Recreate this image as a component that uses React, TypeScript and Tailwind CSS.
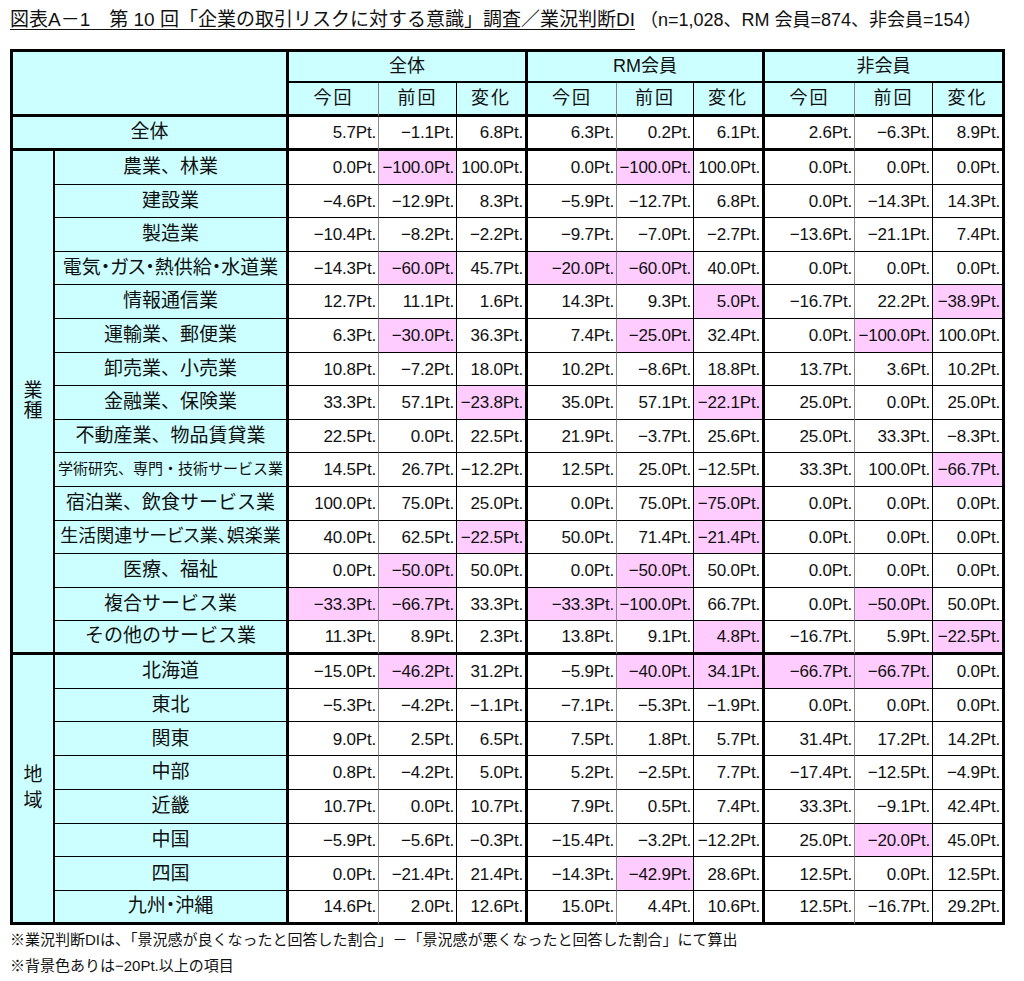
import React from "react";

type Row = { label: string; v: string[]; p: number[]; cls?: string };

const industry: Row[] = [
  { label: "農業、林業", v: ["0.0", "−100.0", "100.0", "0.0", "−100.0", "100.0", "0.0", "0.0", "0.0"], p: [1, 4] },
  { label: "建設業", v: ["−4.6", "−12.9", "8.3", "−5.9", "−12.7", "6.8", "0.0", "−14.3", "14.3"], p: [] },
  { label: "製造業", v: ["−10.4", "−8.2", "−2.2", "−9.7", "−7.0", "−2.7", "−13.6", "−21.1", "7.4"], p: [] },
  { label: "電気・ガス・熱供給・水道業", v: ["−14.3", "−60.0", "45.7", "−20.0", "−60.0", "40.0", "0.0", "0.0", "0.0"], p: [1, 3, 4], cls: "text-[19px] [font-feature-settings:'palt']" },
  { label: "情報通信業", v: ["12.7", "11.1", "1.6", "14.3", "9.3", "5.0", "−16.7", "22.2", "−38.9"], p: [5, 8] },
  { label: "運輸業、郵便業", v: ["6.3", "−30.0", "36.3", "7.4", "−25.0", "32.4", "0.0", "−100.0", "100.0"], p: [1, 4, 7] },
  { label: "卸売業、小売業", v: ["10.8", "−7.2", "18.0", "10.2", "−8.6", "18.8", "13.7", "3.6", "10.2"], p: [] },
  { label: "金融業、保険業", v: ["33.3", "57.1", "−23.8", "35.0", "57.1", "−22.1", "25.0", "0.0", "25.0"], p: [2, 5] },
  { label: "不動産業、物品賃貸業", v: ["22.5", "0.0", "22.5", "21.9", "−3.7", "25.6", "25.0", "33.3", "−8.3"], p: [] },
  { label: "学術研究、専門・技術サービス業", v: ["14.5", "26.7", "−12.2", "12.5", "25.0", "−12.5", "33.3", "100.0", "−66.7"], p: [8], cls: "text-[15px]" },
  { label: "宿泊業、飲食サービス業", v: ["100.0", "75.0", "25.0", "0.0", "75.0", "−75.0", "0.0", "0.0", "0.0"], p: [5] },
  { label: "生活関連サービス業、娯楽業", v: ["40.0", "62.5", "−22.5", "50.0", "71.4", "−21.4", "0.0", "0.0", "0.0"], p: [2, 5], cls: "text-[18px] [font-feature-settings:'palt']" },
  { label: "医療、福祉", v: ["0.0", "−50.0", "50.0", "0.0", "−50.0", "50.0", "0.0", "0.0", "0.0"], p: [1, 4] },
  { label: "複合サービス業", v: ["−33.3", "−66.7", "33.3", "−33.3", "−100.0", "66.7", "0.0", "−50.0", "50.0"], p: [0, 1, 3, 4, 7] },
  { label: "その他のサービス業", v: ["11.3", "8.9", "2.3", "13.8", "9.1", "4.8", "−16.7", "5.9", "−22.5"], p: [5, 8] },
];

const region: Row[] = [
  { label: "北海道", v: ["−15.0", "−46.2", "31.2", "−5.9", "−40.0", "34.1", "−66.7", "−66.7", "0.0"], p: [1, 4, 5, 6, 7] },
  { label: "東北", v: ["−5.3", "−4.2", "−1.1", "−7.1", "−5.3", "−1.9", "0.0", "0.0", "0.0"], p: [] },
  { label: "関東", v: ["9.0", "2.5", "6.5", "7.5", "1.8", "5.7", "31.4", "17.2", "14.2"], p: [] },
  { label: "中部", v: ["0.8", "−4.2", "5.0", "5.2", "−2.5", "7.7", "−17.4", "−12.5", "−4.9"], p: [] },
  { label: "近畿", v: ["10.7", "0.0", "10.7", "7.9", "0.5", "7.4", "33.3", "−9.1", "42.4"], p: [] },
  { label: "中国", v: ["−5.9", "−5.6", "−0.3", "−15.4", "−3.2", "−12.2", "25.0", "−20.0", "45.0"], p: [7] },
  { label: "四国", v: ["0.0", "−21.4", "21.4", "−14.3", "−42.9", "28.6", "12.5", "0.0", "12.5"], p: [4] },
  { label: "九州・沖縄", v: ["14.6", "2.0", "12.6", "15.0", "4.4", "10.6", "12.5", "−16.7", "29.2"], p: [], cls: "text-[19px] [font-feature-settings:'palt']" },
];

const total = ["5.7", "−1.1", "6.8", "6.3", "0.2", "6.1", "2.6", "−6.3", "8.9"];

function rightBorder(j: number) {
  if (j % 3 === 0) return "border-r border-r-[#8c8c8c]";
  if (j % 3 === 1) return "border-r border-r-black";
  return "border-r-[3px] border-r-black";
}

function ValueCell({ j, text, pink, last }: { j: number; text: string; pink: boolean; last: boolean }) {
  return (
    <div
      className={`flex items-center justify-end pr-[2px] pt-[1px] text-[17px] whitespace-nowrap tracking-[-0.2px] ${rightBorder(j)} ${
        last ? "border-b-[3px] border-b-black" : "border-b border-b-black"
      } ${pink ? "bg-[#ffccff]" : "bg-white"}`}
    >
      {text}Pt.
    </div>
  );
}

function Section({ rows, title, leading }: { rows: Row[]; title: string; leading: string }) {
  return (
    <>
      {rows.map((r, i) => {
        const last = i === rows.length - 1;
        return (
          <React.Fragment key={r.label}>
            {i === 0 && (
              <div
                className={`col-start-1 flex flex-col items-center justify-center bg-[#ccffff] border-r-2 border-r-black border-b-[3px] border-b-black text-[19px] ${leading} ${
                  rows.length === 15 ? "row-span-15" : "row-span-8"
                }`}
              >
                {title.split("").map((c) => (
                  <span key={c}>{c}</span>
                ))}
              </div>
            )}
            <div
              className={`col-start-2 flex items-center justify-center whitespace-nowrap bg-[#ccffff] border-r-[3px] border-r-black ${
                last ? "border-b-[3px] border-b-black" : "border-b border-b-black"
              } ${r.cls ?? "text-[19px]"}`}
            >
              {r.label}
            </div>
            {r.v.map((t, j) => (
              <ValueCell key={j} j={j} text={t} pink={r.p.includes(j)} last={last} />
            ))}
          </React.Fragment>
        );
      })}
    </>
  );
}

export default function App() {
  return (
    <div className="w-[1024px] h-[981px] bg-white text-[#111] font-['Liberation_Sans','Noto_Sans_CJK_JP',sans-serif] pl-[10px] pt-[7px]">
      <div className="h-[42px] text-[19px] leading-[26px] whitespace-nowrap">
        <span className="underline decoration-1 underline-offset-[3px]">
          図表A－1　第 10 回「企業の取引リスクに対する意識」調査／業況判断DI
        </span>
        <span className="text-[18px]"> （n=1,028、RM 会員=874、非会員=154）</span>
      </div>
      <div className="w-[995px] grid grid-cols-[42px_234px_90px_78px_71px_89px_77px_71px_90px_78px_72px] grid-rows-[31px_34px_34px_repeat(15,33.6px)_repeat(8,33.75px)] border-l-[3px] border-t-[3px] border-black">
        <div className="col-span-2 row-span-2 bg-[#ccffff] border-r-[3px] border-b-[3px] border-black" />
        {["全体", "RM会員", "非会員"].map((g) => (
          <div
            key={g}
            className="col-span-3 flex items-center justify-center bg-[#ccffff] border-r-[3px] border-r-black border-b-2 border-b-black text-[18px]"
          >
            {g}
          </div>
        ))}
        {Array.from({ length: 9 }).map((_, j) => (
          <div
            key={j}
            className={`flex items-center justify-center bg-[#ccffff] border-b-[3px] border-b-black text-[18px] tracking-[2px] ${rightBorder(j)}`}
          >
            {["今回", "前回", "変化"][j % 3]}
          </div>
        ))}
        <div className="col-span-2 flex items-center justify-center bg-[#ccffff] border-r-[3px] border-r-black border-b-[3px] border-b-black text-[19px]">
          全体
        </div>
        {total.map((t, j) => (
          <ValueCell key={j} j={j} text={t} pink={false} last={true} />
        ))}
        <Section rows={industry} title="業種" leading="leading-[20px]" />
        <Section rows={region} title="地域" leading="leading-[26px]" />
      </div>
      <div className="text-[15px] leading-[26px] pt-[2px]">
        <div>※業況判断DIは、「景況感が良くなったと回答した割合」－「景況感が悪くなったと回答した割合」にて算出</div>
        <div>※背景色ありは−20Pt.以上の項目</div>
      </div>
    </div>
  );
}
